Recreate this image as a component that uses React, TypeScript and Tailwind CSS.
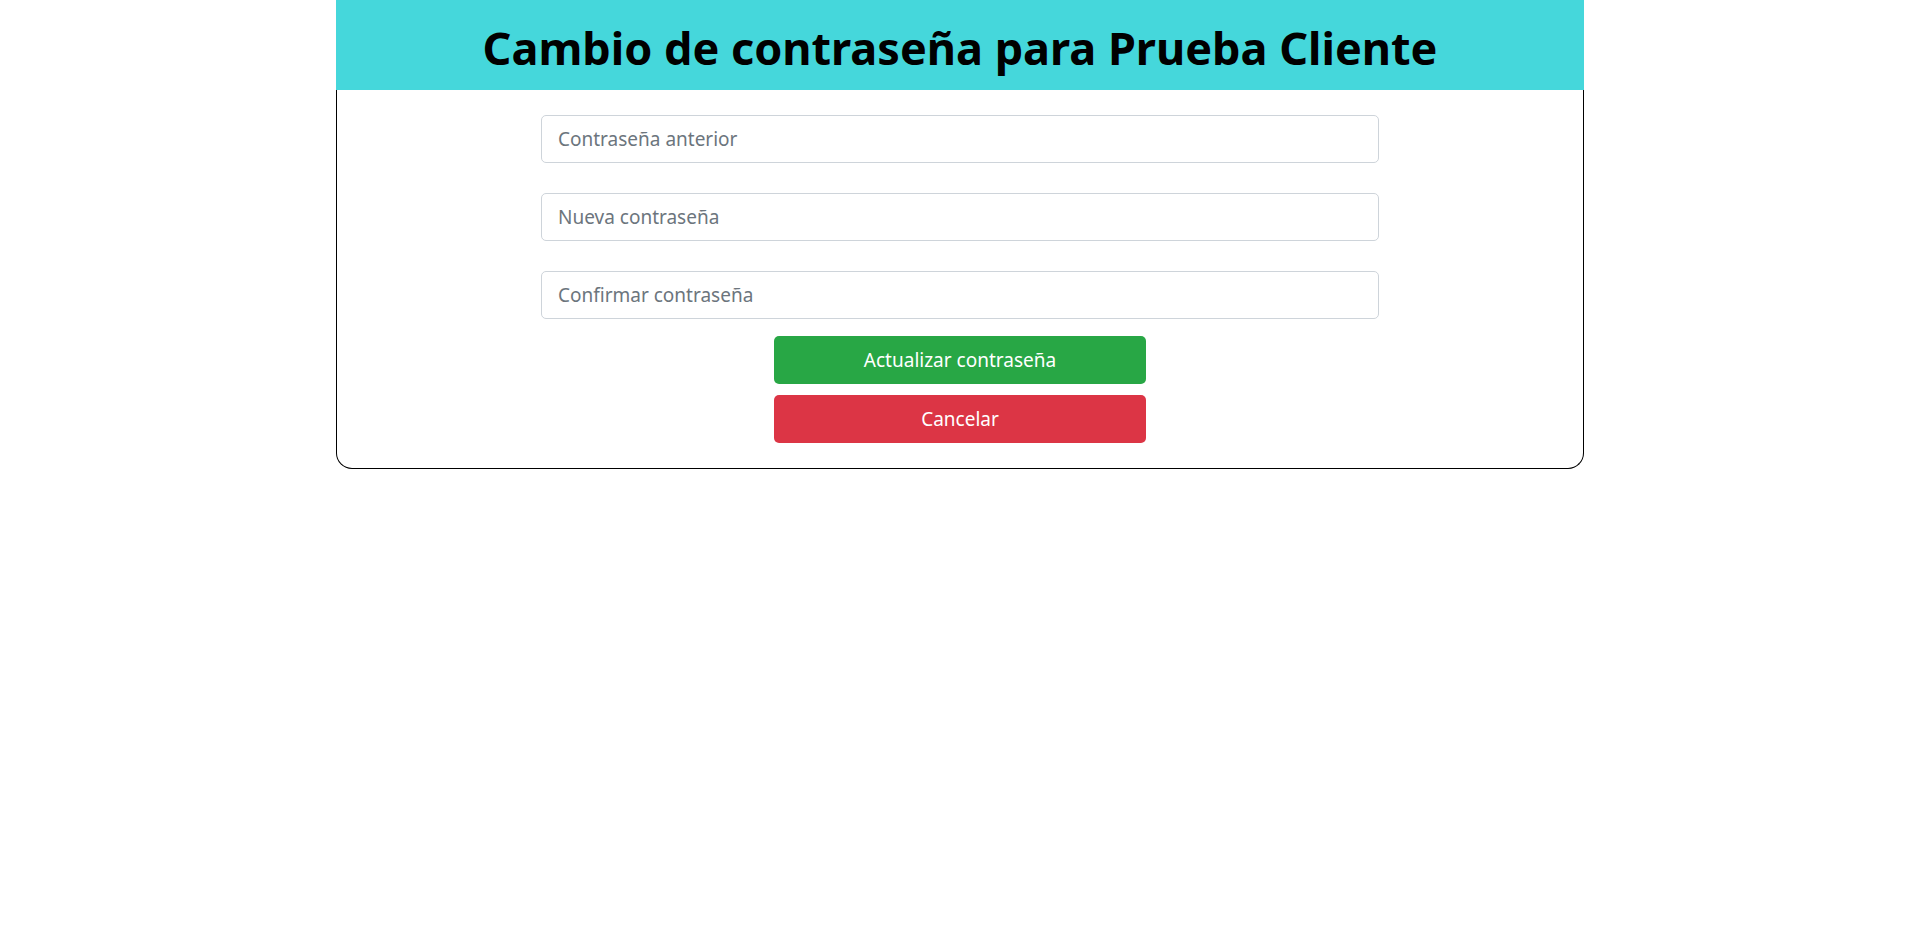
const FIELDS = ["Contraseña anterior", "Nueva contraseña", "Confirmar contraseña"];

export default function App() {
  return (
    <div className="min-h-screen bg-white font-['Noto_Sans',sans-serif] text-black">
      <div className="mx-auto w-[1248px]">
        <div className="flex h-[90px] items-center justify-center bg-[#45d7db]">
          <h1 className="pt-1 text-[45px] font-bold leading-none">
            Cambio de contraseña para Prueba Cliente
          </h1>
        </div>
        <div className="flex flex-col items-center rounded-b-[16px] border border-t-0 border-black pb-[25px] pt-[25px]">
          <form className="flex w-[838px] flex-col gap-[30px]">
            {FIELDS.map((f) => (
              <input
                key={f}
                type="password"
                placeholder={f}
                className="h-[48px] w-full rounded-[5px] border border-[#ced4da] px-4 text-[19px] text-[#495057] placeholder:text-[#6c757d] outline-none"
              />
            ))}
          </form>
          <div className="mt-[17px] flex w-[372px] flex-col gap-[11px]">
            <button className="h-[48px] w-full rounded-[5px] bg-[#28a745] text-[19px] text-white">
              Actualizar contraseña
            </button>
            <button className="h-[48px] w-full rounded-[5px] bg-[#dc3545] text-[19px] text-white">
              Cancelar
            </button>
          </div>
        </div>
      </div>
    </div>
  );
}
